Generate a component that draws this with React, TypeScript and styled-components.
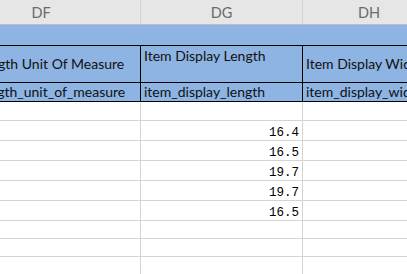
import React from "react";
import styled, { createGlobalStyle } from "styled-components";

const GlobalStyle = createGlobalStyle`
  html, body { margin: 0; padding: 0; background: #ffffff; overflow: hidden; }
  * { box-sizing: border-box; }
`;

const UI_FONT = `Lato, "Liberation Sans", sans-serif`;
const NUM_FONT = `"Liberation Mono", "DejaVu Sans Mono", monospace`;

const COLS = [
  { name: "DF", width: 199 },
  { name: "DG", width: 162 },
  { name: "DH", width: 133 },
];

const Viewport = styled.div`
  width: 407px;
  height: 274px;
  overflow: hidden;
`;

/* the sheet is scrolled horizontally; column DF starts left of the viewport */
const Sheet = styled.div<{ $scrollX: number }>`
  margin-left: ${(p) => -p.$scrollX}px;
  width: max-content;
`;

const Row = styled.div<{ $h: number; $line: string; $bg: string }>`
  display: flex;
  height: ${(p) => p.$h}px;
  background: ${(p) => p.$bg};
  border-bottom: 1px solid ${(p) => p.$line};
`;

const ColHeader = styled.div<{ $w: number }>`
  width: ${(p) => p.$w}px;
  flex: none;
  display: flex;
  align-items: center;
  justify-content: center;
  border-right: 1px solid #d2d2d2;
  font-family: ${UI_FONT};
  font-size: 14.5px;
  color: #6a6a6a;
  padding-top: 1px;
`;

const Band = styled.div`
  width: 494px;
`;

const Cell = styled.div<{
  $w: number;
  $line: string;
  $valign?: "top" | "center" | "bottom";
  $align?: "left" | "right";
}>`
  width: ${(p) => p.$w}px;
  flex: none;
  display: flex;
  overflow: hidden;
  white-space: nowrap;
  border-right: 1px solid ${(p) => p.$line};
  align-items: ${(p) =>
    p.$valign === "top" ? "flex-start" : p.$valign === "bottom" ? "flex-end" : "center"};
  justify-content: ${(p) => (p.$align === "right" ? "flex-end" : "flex-start")};
  padding: 0 3px;
`;

const Label = styled.span<{ $pt?: number }>`
  font-family: ${UI_FONT};
  font-size: 14px;
  line-height: 18px;
  color: #111;
  padding-top: ${(p) => p.$pt ?? 0}px;
`;

const Num = styled.span`
  font-family: ${NUM_FONT};
  font-size: 12.5px;
  line-height: 14px;
  color: #000;
  padding-right: 0px;
`;

const BLACK = "#000000";
const GRID = "#d4d4d4";
const BLUE = "#8db4e2";

const dataRows: { h: number; v?: string }[] = [
  { h: 19 },
  { h: 20, v: "16.4" },
  { h: 20, v: "16.5" },
  { h: 20, v: "19.7" },
  { h: 20, v: "19.7" },
  { h: 20, v: "16.5" },
  { h: 18 },
  { h: 18 },
  { h: 18 },
];

export default function App() {
  return (
    <>
      <GlobalStyle />
      <Viewport>
        <Sheet $scrollX={58}>
          <Row $h={25} $line="#bfbfbf" $bg="#e6e6e6">
            {COLS.map((c) => (
              <ColHeader key={c.name} $w={c.width}>
                {c.name}
              </ColHeader>
            ))}
          </Row>
          <Row $h={21} $line={BLACK} $bg={BLUE}>
            <Band />
          </Row>
          <Row $h={37} $line={BLACK} $bg={BLUE}>
            <Cell $w={COLS[0].width} $line={BLACK} $valign="center">
              <Label>Item Length Unit Of Measure</Label>
            </Cell>
            <Cell $w={COLS[1].width} $line={BLACK} $valign="top">
              <Label $pt={1}>Item Display Length</Label>
            </Cell>
            <Cell $w={COLS[2].width} $line={BLACK} $valign="center">
              <Label>Item Display Width</Label>
            </Cell>
          </Row>
          <Row $h={19} $line={BLACK} $bg={BLUE}>
            <Cell $w={COLS[0].width} $line={BLACK} $valign="center">
              <Label>item_length_unit_of_measure</Label>
            </Cell>
            <Cell $w={COLS[1].width} $line={BLACK} $valign="center">
              <Label>item_display_length</Label>
            </Cell>
            <Cell $w={COLS[2].width} $line={BLACK} $valign="center">
              <Label>item_display_width</Label>
            </Cell>
          </Row>
          {dataRows.map((r, i) => (
            <Row key={i} $h={r.h} $line={GRID} $bg="#ffffff">
              <Cell $w={COLS[0].width} $line={GRID} />
              <Cell $w={COLS[1].width} $line={GRID} $valign="bottom" $align="right">
                {r.v && <Num>{r.v}</Num>}
              </Cell>
              <Cell $w={COLS[2].width} $line={GRID} />
            </Row>
          ))}
        </Sheet>
      </Viewport>
    </>
  );
}
